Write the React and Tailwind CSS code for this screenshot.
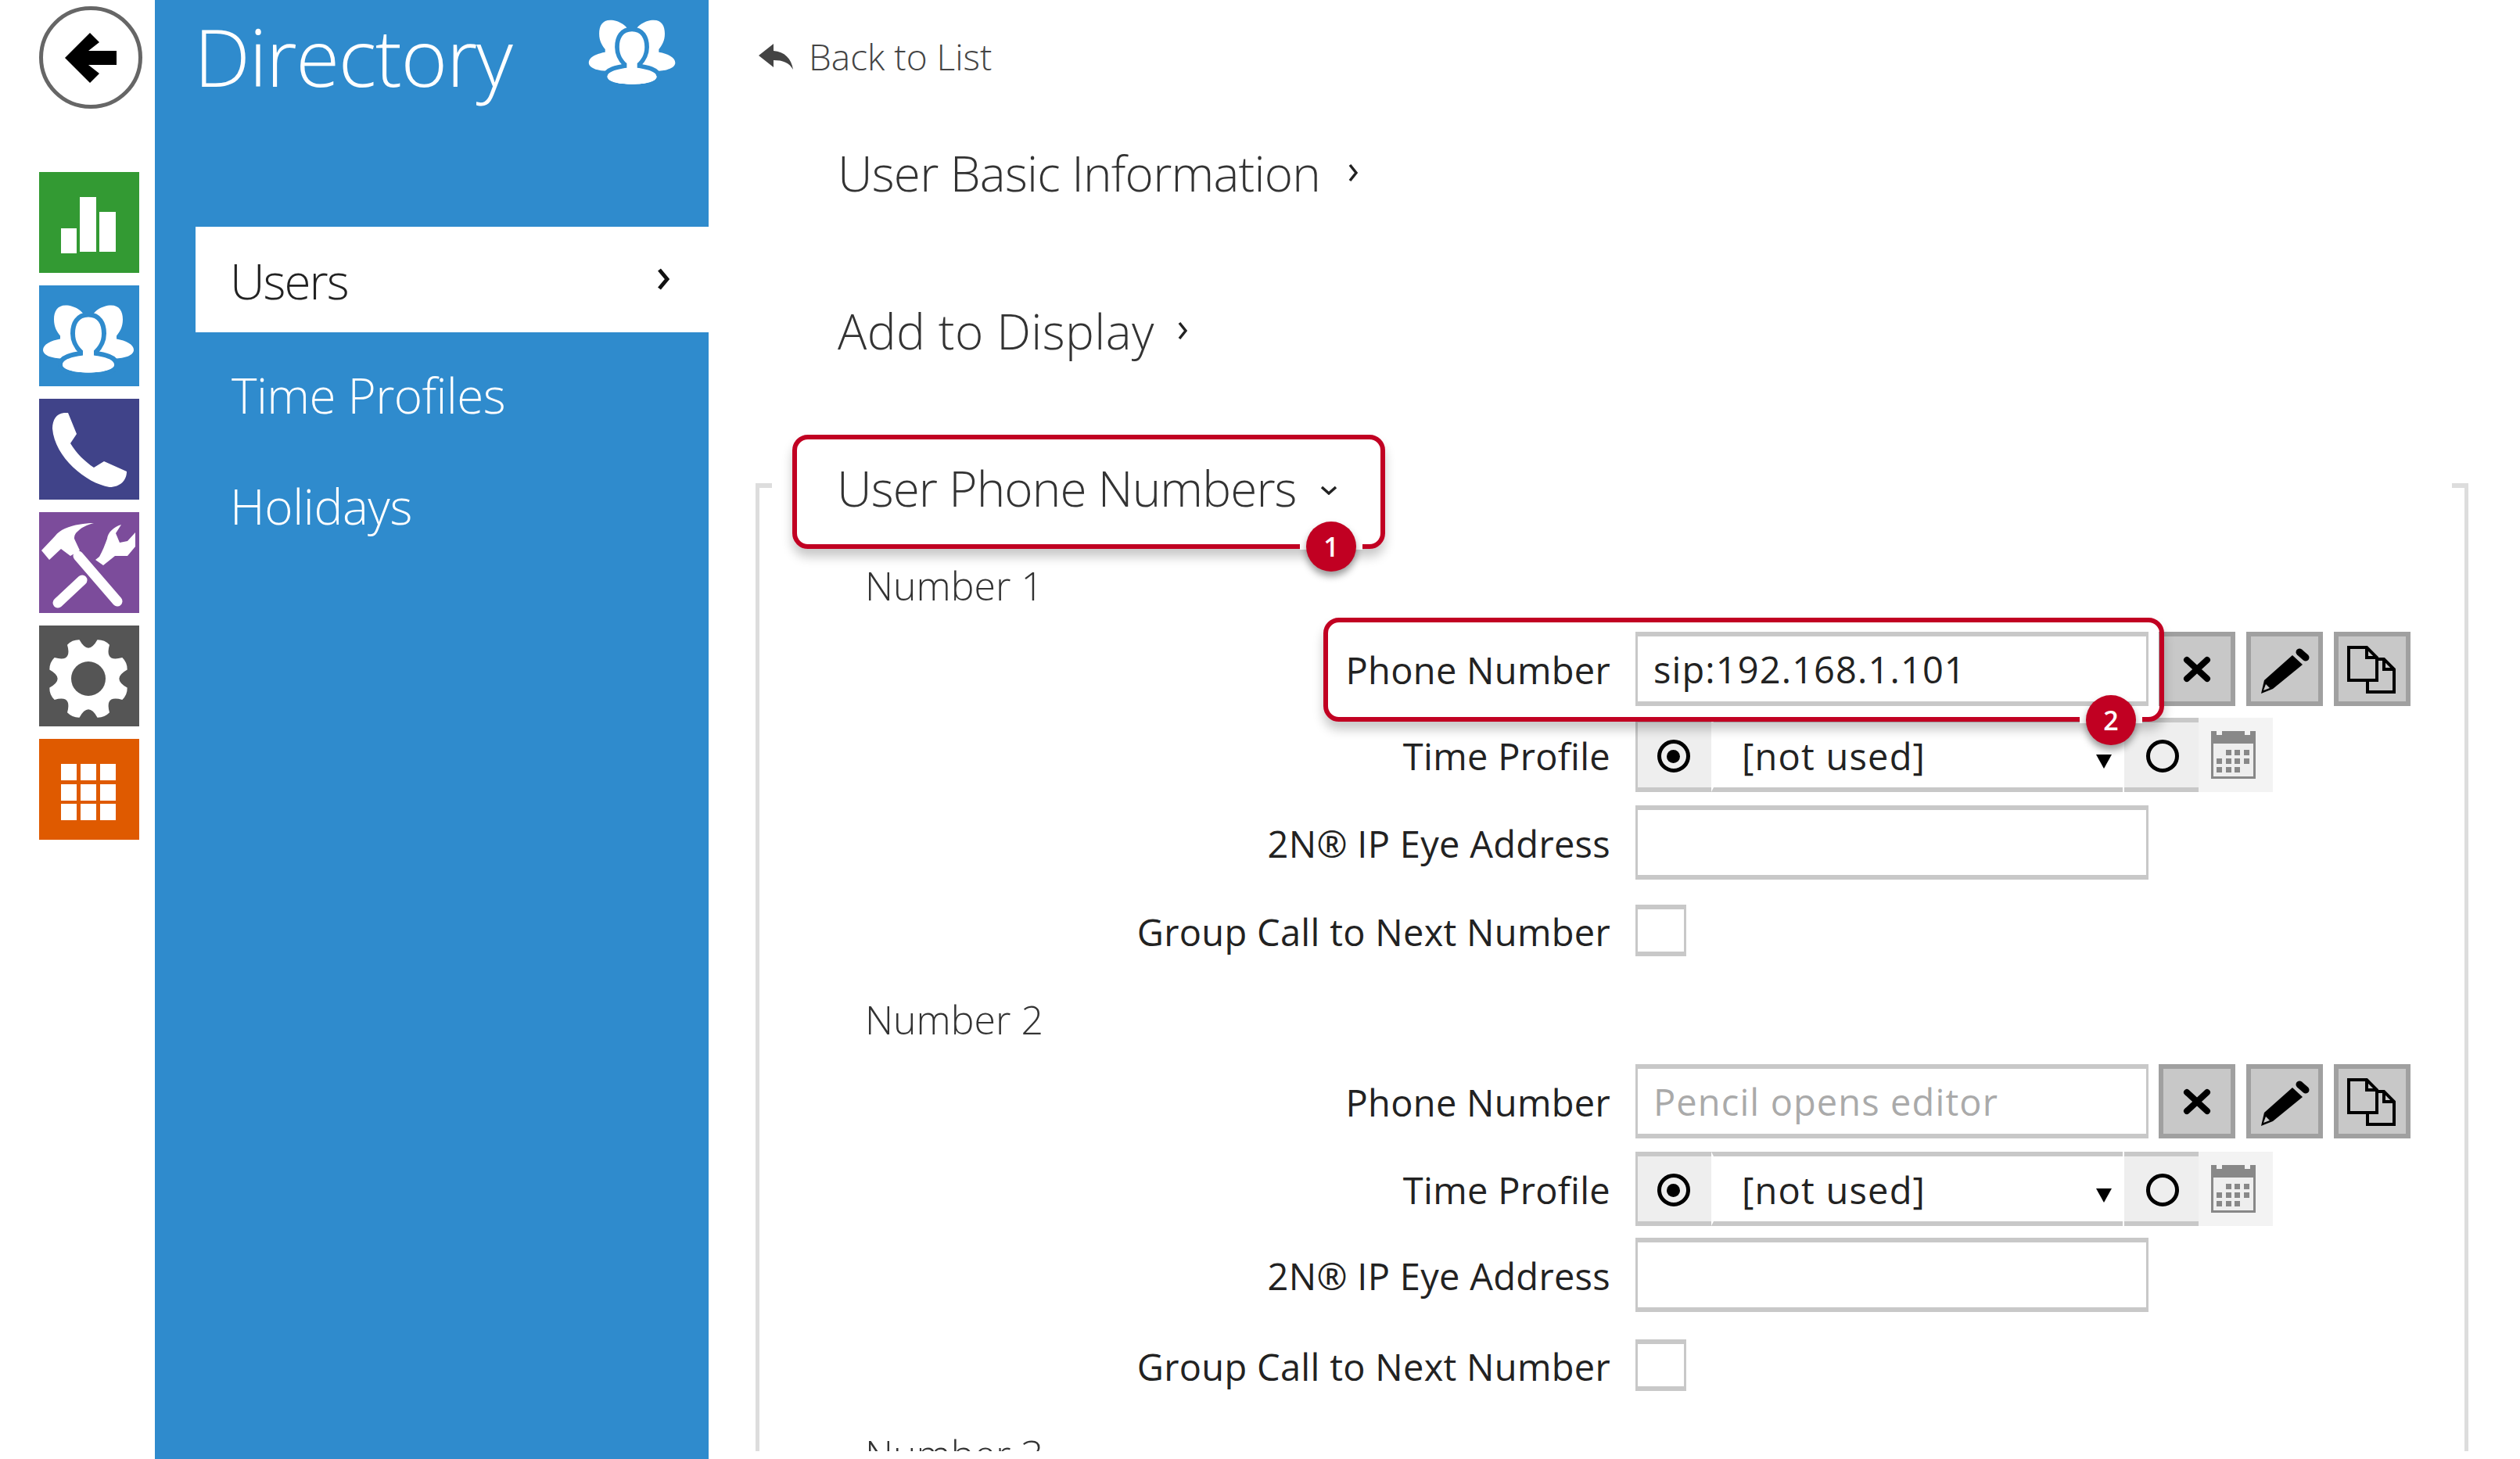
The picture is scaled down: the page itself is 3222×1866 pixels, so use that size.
import React from "react";

const font = "font-['Open_Sans',sans-serif]";

function UsersIcon({ bg, className }) {
  return (
    <svg viewBox="0 0 128 128" className={className}>
      <g fill="#fff">
        <path d="M34 25c-11 0-15 8-15 18 0 10 4 16 8 21v4c-12 2-22 7-22 14 0 7 12 11 24 11 14 0 30-6 30-16V43c0-10-14-18-25-18z" />
        <path d="M92 25c11 0 15 8 15 18 0 10-4 16-8 21v4c12 2 22 7 22 14 0 7-12 11-24 11-14 0-30-6-30-16V43c0-10 14-18 25-18z" />
      </g>
      <path
        d="M63 40c-12 0-17 9-17 21 0 11 5 17 10 22v6c-14 2-26 5-26 12 0 6 14 10 33 10s33-4 33-10c0-7-12-10-26-12v-6c5-5 10-11 10-22 0-12-5-21-17-21z"
        fill="#fff"
        stroke={bg}
        strokeWidth="12"
        paintOrder="stroke"
      />
      <ellipse cx="63" cy="101" rx="33" ry="10" fill="#fff" />
    </svg>
  );
}

function gearPath() {
  const cx = 63;
  const cy = 68;
  let d = "";
  for (let k = 0; k < 8; k++) {
    const a = ((22.5 + k * 45 - 90) * Math.PI) / 180;
    const s = (9.5 * Math.PI) / 180;
    const n = a + (22.5 * Math.PI) / 180;
    const p = (r, t) => `${(cx + r * Math.cos(t)).toFixed(1)} ${(cy + r * Math.sin(t)).toFixed(1)}`;
    d += `${k === 0 ? "M" : "L"}${p(51, a - s)} Q${p(54, a)} ${p(51, a + s)} `;
    d += `Q${p(29, n)} ${p(51, n + (13 * Math.PI) / 180)} `;
  }
  return d + "Z";
}

function Tile({ bg, children }) {
  return <div className={`w-[128px] h-[129px] ${bg}`}>{children}</div>;
}

function LeftStrip() {
  return (
    <div className="w-[198px] shrink-0 pl-[50px] pt-[8px]">
      <div className="w-[132px] h-[131px] rounded-full border-[5px] border-[#666] flex items-center justify-center">
        <svg viewBox="0 0 66 64" className="w-[66px] h-[64px]">
          <path d="M0 32 32 0l12 12-14 11h36v18H30l14 11-12 12z" fill="#000" />
        </svg>
      </div>
      <div className="mt-[81px] flex flex-col gap-[16px]">
        <Tile bg="bg-[#339a33]">
          <svg viewBox="0 0 128 129" className="w-full h-full" fill="#fff">
            <rect x="28" y="72" width="20" height="32" />
            <rect x="52" y="32" width="21" height="70" />
            <rect x="77" y="51" width="21" height="51" />
          </svg>
        </Tile>
        <Tile bg="bg-[#2f8bcd]">
          <UsersIcon bg="#2f8bcd" className="w-full h-full" />
        </Tile>
        <Tile bg="bg-[#404389]">
          <svg viewBox="0 0 128 129" className="w-full h-full">
            <path
              d="M17 38C17 27 22 19 32 18h5l11 27-8 12c8 13 18 23 30 31l13-8 29 13c0 11-8 20-22 20C60 108 20 75 17 38z"
              fill="#fff"
            />
          </svg>
        </Tile>
        <Tile bg="bg-[#7c4c9b]">
          <svg viewBox="0 0 128 129" className="w-full h-full" fill="#fff">
            <path d="M3 49 20 31c4-5 8-8 13-10 12-5 25-7 37-7-8 2-15 5-20 10-4 3-5 6-5 10l7 15-12 7-12-9-15 14z" />
            <path d="M72 61 77 57c4-7 7-15 10-23 1-8 8-15 18-18l-7 11 5 12 10-2 10-11v18l-10 12H97L82 68z" />
            <path d="M50 56 100 114" stroke="#fff" strokeWidth="13" strokeLinecap="round" fill="none" />
            <path d="M24 116 55 87" stroke="#fff" strokeWidth="13" strokeLinecap="round" fill="none" />
          </svg>
        </Tile>
        <Tile bg="bg-[#555555]">
          <svg viewBox="0 0 128 129" className="w-full h-full">
            <path d={gearPath()} fill="#fff" />
            <circle cx="63" cy="68" r="22" fill="#555" />
          </svg>
        </Tile>
        <Tile bg="bg-[#df5a00]">
          <svg viewBox="0 0 128 129" className="w-full h-full" fill="#fff">
            {[28, 53, 78].map((x) =>
              [32, 58, 83].map((y) => <rect key={x + "-" + y} x={x} y={y} width="20" height="21" />)
            )}
          </svg>
        </Tile>
      </div>
    </div>
  );
}

function NavPanel() {
  return (
    <div className="w-[708px] h-[1866px] shrink-0 bg-[#2f8bcd] text-white">
      <div className="h-[290px] pl-[52px] pr-[36px] flex justify-between items-start">
        <div className="text-[102px] leading-[144px] font-light tracking-[-1.5px] -ml-[2px]">Directory</div>
        <UsersIcon bg="#2f8bcd" className="w-[122px] h-[122px] mt-[2px]" />
      </div>
      <div className="ml-[52px] h-[135px] bg-white text-[#222] flex items-center justify-between pl-[44px] pr-[50px]">
        <span className="text-[62px] font-light tracking-[-2px] mt-[4px]">Users</span>
        <svg viewBox="0 0 16 30" className="w-[16px] h-[30px] -mt-[2px]">
          <path d="M3 3 13 15 3 27" fill="none" stroke="#111" strokeWidth="5" />
        </svg>
      </div>
      <div className="ml-[52px] mt-[9px] h-[142px] flex items-center pl-[46px] text-[62px] font-light tracking-[-0.6px]">
        Time Profiles
      </div>
      <div className="ml-[52px] h-[142px] flex items-center pl-[44px] text-[62px] font-light tracking-[-0.4px]">
        Holidays
      </div>
    </div>
  );
}

function Badge({ n, className }) {
  return (
    <div className={`absolute w-[64px] h-[64px] ${className}`}>
      <div className="absolute -left-[8px] -right-[8px] top-[26px] h-[10px] bg-white" />
      <div className="absolute inset-0 rounded-full bg-[#c10022] text-white text-[34px] font-semibold flex items-center justify-center shadow-[0_6px_10px_rgba(0,0,0,0.4)]">
        {n}
      </div>
    </div>
  );
}

function Heading({ className, children }) {
  return (
    <div className={`h-[100px] flex items-center text-[#333] text-[62px] font-light ${className}`}>{children}</div>
  );
}

function ChevronRight({ className }) {
  return (
    <svg viewBox="0 0 12 24" className={`w-[12px] h-[24px] ${className}`}>
      <path d="M2 2 10 12 2 22" fill="none" stroke="#222" strokeWidth="3.5" />
    </svg>
  );
}

function Label({ children }) {
  return (
    <div className="w-[1088px] shrink-0 pt-[3px] text-right text-[47px] leading-[60px] text-[#222] tracking-[0.3px]">
      {children}
    </div>
  );
}

function TextField({ value, placeholder }) {
  return (
    <input
      readOnly
      defaultValue={value}
      placeholder={placeholder}
      className="w-[656px] h-[95px] bg-white border-x-[3px] border-y-[6px] border-[#c8c8c8] pl-[20px] text-[47px] tracking-[1.1px] text-[#222] placeholder:text-[#aaa] outline-none"
    />
  );
}

function ToolButton({ children, className }) {
  return (
    <div className={`w-[98px] h-[95px] bg-[#c8c8c8] border-[6px] border-[#a0a0a0] ${className}`}>{children}</div>
  );
}

function ToolIcon({ children }) {
  return (
    <svg viewBox="0 0 98 95" className="w-[98px] h-[95px] -m-[6px]">
      {children}
    </svg>
  );
}

function PhoneField({ value, placeholder }) {
  return (
    <div className="flex gap-[13px]">
      <TextField value={value} placeholder={placeholder} />
      <div className="flex gap-[14px]">
        <ToolButton>
          <ToolIcon>
            <path d="M36 36 62 60M62 36 36 60" stroke="#000" strokeWidth="8" strokeLinecap="round" />
          </ToolIcon>
        </ToolButton>
        <ToolButton>
          <ToolIcon>
            <path d="M59 30 72 42 34 73 19 79 23 62z" fill="#000" />
            <path d="M25 67 30 72 22 75z" fill="#c8c8c8" />
            <path d="M68 26 76 33" stroke="#000" strokeWidth="9" strokeLinecap="round" />
          </ToolIcon>
        </ToolButton>
        <ToolButton>
          <ToolIcon>
            <g fill="#c8c8c8" stroke="#000" strokeWidth="4">
              <path d="M19 20H42L55 33V62H19z" />
              <path d="M42 20V33H55" fill="none" />
              <path d="M55 35H64L77 48V77H43V62H55z" />
              <path d="M64 35V48H77" fill="none" />
            </g>
          </ToolIcon>
        </ToolButton>
      </div>
    </div>
  );
}

function Radio({ checked }) {
  return (
    <div className="w-[42px] h-[42px] rounded-full border-[5px] border-black flex items-center justify-center">
      {checked && <div className="w-[17px] h-[17px] rounded-full bg-black" />}
    </div>
  );
}

function TimeProfile() {
  return (
    <div className="flex h-[95px] text-[47px] tracking-[1.2px] text-[#222]">
      <div className="w-[97px] bg-[#eeeeee] border-y-[6px] border-l-[3px] border-[#c8c8c8] flex items-center justify-center pr-[3px] pt-[3px]">
        <Radio checked />
      </div>
      <div className="w-[526px] bg-white border-y-[6px] border-[#c8c8c8] border-l-[3px] border-l-[#fff] pl-[36px] pr-[14px] pt-[3px] flex items-center justify-between">
        <span>[not used]</span>
        <svg viewBox="0 0 20 18" className="w-[20px] h-[18px] mt-[14px]">
          <path d="M0 0H20L10 18z" fill="#000" />
        </svg>
      </div>
      <div className="w-[95px] ml-[2px] bg-[#eeeeee] border-y-[6px] border-[#c8c8c8] flex items-center justify-center pl-[2px] pt-[3px]">
        <Radio />
      </div>
      <div className="w-[95px] bg-[#f3f3f3] flex items-center justify-center pr-[6px]">
        <svg viewBox="0 0 57 61" className="w-[57px] h-[61px]">
          <rect x="1.5" y="1.5" width="54" height="58" fill="#eee" stroke="#888" strokeWidth="3" />
          <rect width="57" height="16" fill="#888" />
          <rect x="7" width="7" height="5" fill="#f3f3f3" />
          <rect x="43" width="7" height="5" fill="#f3f3f3" />
          <g fill="#888">
            {[19, 30, 42].map((x) => (
              <rect key={x} x={x} y="24" width="7" height="7" />
            ))}
            {[7, 19, 30, 42].map((x) => (
              <rect key={x} x={x} y="35" width="7" height="7" />
            ))}
            {[7, 19, 30].map((x) => (
              <rect key={x} x={x} y="46" width="7" height="7" />
            ))}
          </g>
        </svg>
      </div>
    </div>
  );
}

function Row({ label, className, children }) {
  return (
    <div className={`flex items-center gap-[32px] relative ${className}`}>
      <Label>{label}</Label>
      {children}
    </div>
  );
}

function NumberLabel({ children, className }) {
  return <div className={`pl-[135px] text-[50px] leading-[60px] font-light text-[#333] ${className}`}>{children}</div>;
}

function Checkbox() {
  return <div className="w-[65px] h-[66px] bg-white border-x-[3px] border-y-[6px] border-[#c8c8c8]" />;
}

function Main() {
  return (
    <div className="flex-1 h-[1856px] overflow-hidden pl-[60px] pr-[66px]">
      <div className="h-[144px] pl-[4px] flex items-center gap-[20px] text-[46px] font-light text-[#444]">
        <svg viewBox="0 0 44 33" className="w-[44px] h-[33px]">
          <path d="M0 15 19 0v9c14 1 23 10 25 24-5-9-13-12-25-12v9z" fill="#444" />
        </svg>
        Back to List
      </div>
      <div className="mt-[27px] pl-[105px]">
        <Heading className="tracking-[-0.8px]">
          User Basic Information
          <ChevronRight className="ml-[36px]" />
        </Heading>
      </div>
      <div className="mt-[102px] pl-[105px]">
        <Heading className="tracking-[0.4px]">
          Add to Display
          <ChevronRight className="ml-[30px]" />
        </Heading>
      </div>
      <div className="flow-root mt-[145px] relative h-[1300px] border-x-[5px] border-[#dddddd]">
        <div className="absolute -left-[5px] top-0 w-[21px] h-[6px] bg-[#dddddd]" />
        <div className="absolute -right-[5px] top-0 w-[21px] h-[6px] bg-[#dddddd]" />
        <div className="relative -mt-[44px] pl-[99px]">
          <Heading className="tracking-[-0.9px]">
            User Phone Numbers
            <svg viewBox="0 0 22 12" className="w-[22px] h-[12px] ml-[30px] mt-[6px]">
              <path d="M2 2 11 10 20 2" fill="none" stroke="#222" strokeWidth="3.5" />
            </svg>
          </Heading>
          <div className="absolute z-10 left-[42px] -top-[18px] w-[758px] h-[146px] rounded-[20px] border-[6px] border-[#c10022] shadow-[0_10px_14px_rgba(0,0,0,0.22)]" />
          <Badge n="1" className="z-20 left-[699px] top-[93px]" />
        </div>
        <NumberLabel className="h-[134px] pt-[45px]">Number 1</NumberLabel>
        <Row label="Phone Number">
          <PhoneField value="sip:192.168.1.101" />
          <div className="absolute z-10 left-[721px] -top-[18px] w-[1075px] h-[133px] rounded-[20px] border-[6px] border-[#c10022] shadow-[0_10px_14px_rgba(0,0,0,0.22)]" />
          <Badge n="2" className="z-20 left-[1696px] top-[81px]" />
        </Row>
        <Row label="Time Profile" className="mt-[15px]">
          <TimeProfile />
        </Row>
        <Row label="2N® IP Eye Address" className="mt-[17px]">
          <TextField />
        </Row>
        <Row label="Group Call to Next Number" className="mt-[32px]">
          <Checkbox />
        </Row>
        <NumberLabel className="h-[138px] pt-[51px]">Number 2</NumberLabel>
        <Row label="Phone Number">
          <PhoneField placeholder="Pencil opens editor" />
        </Row>
        <Row label="Time Profile" className="mt-[17px]">
          <TimeProfile />
        </Row>
        <Row label="2N® IP Eye Address" className="mt-[15px]">
          <TextField />
        </Row>
        <Row label="Group Call to Next Number" className="mt-[35px]">
          <Checkbox />
        </Row>
        <NumberLabel className="h-[138px] pt-[51px]">Number 3</NumberLabel>
      </div>
    </div>
  );
}

export default function App() {
  return (
    <div className={`flex w-[3222px] h-[1866px] overflow-hidden bg-white ${font}`}>
      <LeftStrip />
      <NavPanel />
      <Main />
    </div>
  );
}
